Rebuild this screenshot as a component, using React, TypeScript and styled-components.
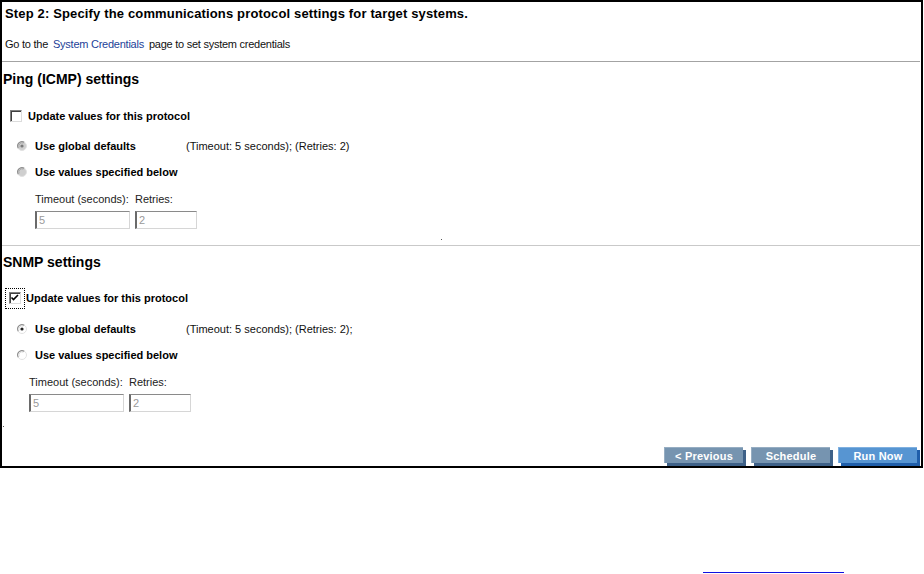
import React from "react";
import styled, { createGlobalStyle, css } from "styled-components";

const GlobalStyle = createGlobalStyle`
  html, body { margin: 0; padding: 0; background: #ffffff; }
  body { font-family: "Liberation Sans", Arial, sans-serif; color: #000; }
`;

const Page = styled.div`
  width: 924px;
  height: 574px;
  overflow: hidden;
`;

const Frame = styled.div`
  box-sizing: border-box;
  width: 923px;
  height: 468px;
  border: 2px solid #000;
  display: flex;
  flex-direction: column;
`;

const Title = styled.div`
  font-size: 13px;
  font-weight: bold;
  letter-spacing: 0.15px;
  line-height: 24px;
  height: 22px;
  padding-left: 3px;
`;

const Intro = styled.div`
  font-size: 11px;
  letter-spacing: -0.25px;
  line-height: 16px;
  margin-top: 12px;
  padding-left: 3px;
  color: #111;
`;

const Link = styled.a`
  color: #1d3f98;
  text-decoration: none;
  margin: 0 5px 0 5px;
`;

const Divider = styled.div<{ $light?: boolean }>`
  height: 1px;
  margin-right: 1px;
  background: ${(p) => (p.$light ? "#c9c9c9" : "#a3a3a3")};
`;

const Section = styled.div<{ $top: number }>`
  margin-top: ${(p) => p.$top}px;
`;

const Heading = styled.div`
  font-size: 14px;
  font-weight: bold;
  line-height: 20px;
  padding-left: 1px;
`;

const Row = styled.div<{ $indent: number; $top: number }>`
  display: flex;
  align-items: center;
  height: 16px;
  margin-top: ${(p) => p.$top}px;
  padding-left: ${(p) => p.$indent}px;
  font-size: 11px;
  line-height: 16px;
`;

const BoldLabel = styled.span<{ $width?: number }>`
  font-weight: bold;
  ${(p) => p.$width && css`width: ${p.$width}px;`}
`;

const Note = styled.span`
  color: #111;
`;

const Focus = styled.span<{ $focused?: boolean }>`
  display: inline-flex;
  align-items: center;
  justify-content: center;
  box-sizing: border-box;
  width: 20px;
  height: 21px;
  margin-left: ${(p) => (p.$focused ? 3 : 4)}px;
  margin-right: ${(p) => (p.$focused ? 1 : 2)}px;
  border: 1px dotted ${(p) => (p.$focused ? "#000" : "transparent")};
`;

const CheckBox = styled.span`
  box-sizing: border-box;
  display: inline-block;
  width: 12px;
  height: 12px;
  border-top: 1px solid #808080;
  border-left: 1px solid #808080;
  border-right: 1px solid #dcdcdc;
  border-bottom: 1px solid #dcdcdc;
  box-shadow: inset 1px 1px 0 #404040;
  background: #fff;
  position: relative;
`;

const RadioWrap = styled.span`
  display: inline-flex;
  width: 10px;
  height: 10px;
  margin-right: 8px;
`;

const FieldLabels = styled.div<{ $indent: number; $top: number }>`
  display: flex;
  margin-top: ${(p) => p.$top}px;
  padding-left: ${(p) => p.$indent}px;
  font-size: 11px;
  line-height: 16px;
  color: #222;
`;

const FieldLabel = styled.span<{ $width: number }>`
  width: ${(p) => p.$width}px;
`;

const Inputs = styled.div<{ $indent: number }>`
  display: flex;
  gap: 5px;
  margin-top: 4px;
  padding-left: ${(p) => p.$indent}px;
`;

const Input = styled.input<{ $width: number }>`
  box-sizing: border-box;
  width: ${(p) => p.$width}px;
  height: 18px;
  margin: 0;
  padding: 0 0 0 2px;
  font-family: "Liberation Sans", Arial, sans-serif;
  font-size: 11px;
  color: #9a9a9a;
  background: #fff;
  border-top: 1px solid #8a8a8a;
  border-left: 2px solid #6a6a6a;
  border-right: 1px solid #d6d6d6;
  border-bottom: 1px solid #d6d6d6;
  outline: none;
`;

const Dot = styled.div<{ $left: number; $top: number }>`
  width: 1px;
  height: 1px;
  margin-left: ${(p) => p.$left}px;
  margin-top: ${(p) => p.$top}px;
  background: #555;
`;

const ButtonBar = styled.div`
  margin-top: auto;
  display: flex;
  justify-content: flex-end;
  gap: 8px;
  padding: 0 4px 3px 0;
`;

const Button = styled.button<{ $primary?: boolean }>`
  box-sizing: border-box;
  width: 79px;
  height: 16px;
  padding: 0;
  border: none;
  border-top: 1px solid ${(p) => (p.$primary ? "#7fb0e0" : "#96adc2")};
  border-left: 1px solid ${(p) => (p.$primary ? "#7fb0e0" : "#96adc2")};
  background: ${(p) => (p.$primary ? "#5795d2" : "#7694b0")};
  box-shadow: 3px 3px 0 ${(p) => (p.$primary ? "#1f5eaa" : "#3e6188")};
  color: #fff;
  font-family: "Liberation Sans", Arial, sans-serif;
  font-weight: bold;
  font-size: 11px;
  letter-spacing: 0.2px;
  line-height: 14px;
  cursor: pointer;
`;

const BlueRule = styled.div`
  width: 141px;
  height: 1px;
  margin: 104px 0 0 703px;
  background: #1010e0;
`;

function Check({ checked }: { checked?: boolean }) {
  return (
    <CheckBox>
      {checked && (
        <svg width="10" height="10" viewBox="0 0 10 10" style={{ position: "absolute", left: 0, top: 0 }}>
          <path d="M1.5 4.5 L3.5 6.5 L8 2" stroke="#000" strokeWidth="1.6" fill="none" />
        </svg>
      )}
    </CheckBox>
  );
}

function Radio({ selected, disabled }: { selected?: boolean; disabled?: boolean }) {
  const fill = disabled ? "#cfcfcf" : "#ffffff";
  return (
    <RadioWrap>
      <svg width="10" height="10" viewBox="0 0 10 10">
        <circle cx="5" cy="5" r="4.5" fill={fill} stroke="#e2e2e2" strokeWidth="1" />
        <path d="M1.3 7.2 A4.3 4.3 0 0 1 7.2 1.3" stroke="#8c8c8c" strokeWidth="1.1" fill="none" />
        <path d="M2.2 6.4 A3.2 3.2 0 0 1 6.4 2.2" stroke={disabled ? "#a8a8a8" : "#d8d8d8"} strokeWidth="0.8" fill="none" />
        {selected && <circle cx="5" cy="5" r="1.6" fill={disabled ? "#7a7a7a" : "#222"} />}
      </svg>
    </RadioWrap>
  );
}

type ProtocolProps = {
  name: string;
  top: number;
  checked?: boolean;
  disabled?: boolean;
  fieldIndent: number;
  defaultsNote: string;
  gaps: { check: number; r1: number; r2: number; labels: number };
};

function Protocol({ name, top, checked, disabled, fieldIndent, defaultsNote, gaps }: ProtocolProps) {
  return (
    <Section $top={top}>
      <Heading>{name}</Heading>
      <Row $indent={0} $top={gaps.check}>
        <Focus $focused={checked}>
          <Check checked={checked} />
        </Focus>
        <BoldLabel>Update values for this protocol</BoldLabel>
      </Row>
      <Row $indent={15} $top={gaps.r1}>
        <Radio selected disabled={disabled} />
        <BoldLabel $width={151}>Use global defaults</BoldLabel>
        <Note>{defaultsNote}</Note>
      </Row>
      <Row $indent={15} $top={gaps.r2}>
        <Radio disabled={disabled} />
        <BoldLabel>Use values specified below</BoldLabel>
      </Row>
      <FieldLabels $indent={fieldIndent} $top={gaps.labels}>
        <FieldLabel $width={100}>Timeout (seconds):</FieldLabel>
        <FieldLabel $width={60}>Retries:</FieldLabel>
      </FieldLabels>
      <Inputs $indent={fieldIndent}>
        <Input $width={95} defaultValue="5" disabled />
        <Input $width={62} defaultValue="2" disabled />
      </Inputs>
    </Section>
  );
}

export default function App() {
  return (
    <Page>
      <GlobalStyle />
      <Frame>
        <Title>Step 2: Specify the communications protocol settings for target systems.</Title>
        <Intro>
          Go to the<Link href="#">System Credentials</Link>page to set system credentials
        </Intro>
        <Divider style={{ marginTop: 9 }} />
        <Protocol
          name="Ping (ICMP) settings"
          top={7}
          disabled
          fieldIndent={33}
          defaultsNote="(Timeout: 5 seconds); (Retries: 2)"
          gaps={{ check: 19, r1: 14, r2: 10, labels: 11 }}
        />
        <Dot $left={439} $top={10} />
        <Divider $light style={{ marginTop: 5 }} />
        <Protocol
          name="SNMP settings"
          top={6}
          checked
          fieldIndent={27}
          defaultsNote="(Timeout: 5 seconds); (Retries: 2);"
          gaps={{ check: 18, r1: 15, r2: 10, labels: 11 }}
        />
        <Dot $left={1} $top={14} />
        <ButtonBar>
          <Button>&lt; Previous</Button>
          <Button>Schedule</Button>
          <Button $primary>Run Now</Button>
        </ButtonBar>
      </Frame>
      <BlueRule />
    </Page>
  );
}
